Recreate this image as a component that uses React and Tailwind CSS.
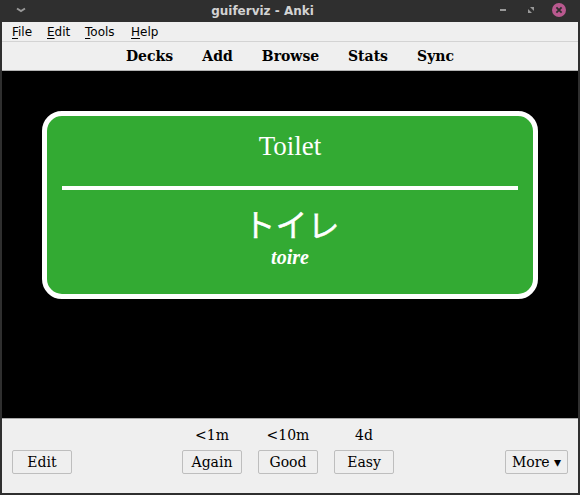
const menus = [
  ['File', 'w-[20px]'],
  ['Edit', 'w-[23px]'],
  ['Tools', 'w-[31px]'],
  ['Help', 'w-[27px]'],
];
const links = [
  ['Decks', 'w-[47px]'],
  ['Add', 'w-[31px]'],
  ['Browse', 'w-[57px]'],
  ['Stats', 'w-[40px]'],
  ['Sync', 'w-[37px]'],
];
const answers = [
  ['<1m', 'Again'],
  ['<10m', 'Good'],
  ['4d', 'Easy'],
];

function Button({ children, className = 'w-[60px]' }) {
  return (
    <button className={`flex h-6 items-center justify-center rounded-[2px] border border-[#bebebe] bg-[#efefef] text-[14px] leading-none whitespace-nowrap ${className}`}>
      {children}
    </button>
  );
}

function TitleBar() {
  return (
    <header className="relative flex h-[22px] items-center justify-between bg-[#2f2f2f] pr-[14px] pl-4">
      <svg width="10" height="20" viewBox="0 0 10 20" className="mb-[2px]" fill="none" stroke="#999" strokeWidth="2">
        <path d="M1 8.5 L5 11 L9 8.5" />
      </svg>
      <h1 className="absolute inset-x-0 top-0 pr-[55px] text-center font-['DejaVu_Sans',sans-serif] text-[12px] leading-[22px] font-bold text-[#d3d3d3]">guiferviz - Anki</h1>
      <svg width="68" height="20" viewBox="0 0 68 20" className="mb-[2px]">
        <rect x="2" y="9" width="6" height="2" fill="#999" />
        <path d="M32 7h4v4zM30 9v4h4z" fill="#999" />
        <circle cx="61" cy="10" r="7" fill="#b9598f" />
        <path d="M58.4 7.4l5.2 5.2M63.6 7.4l-5.2 5.2" stroke="#2f2f2f" strokeWidth="1.8" />
      </svg>
    </header>
  );
}

export default function App() {
  return (
    <div className="flex h-[495px] w-[580px] flex-col overflow-hidden bg-[#2f2f2f] font-['DejaVu_Serif',serif] text-black">
      <TitleBar />
      <div className="mx-[2px] mb-[2px] flex flex-1 flex-col bg-[#efefef]">
        <nav className="flex h-5 gap-[15px] border-b border-[#d3d3d3] pl-[10px] font-['DejaVu_Sans',sans-serif] text-[12px] leading-[20px]">
          {menus.map(([m, w]) => (
            <span key={m} className={w}>
              <span className="underline decoration-1 underline-offset-2">{m[0]}</span>
              {m.slice(1)}
            </span>
          ))}
        </nav>
        <nav className="flex h-[29px] justify-center gap-[29px] border-b border-[#b3b3b3] text-[14px] leading-7 font-bold">
          {links.map(([l, w]) => (
            <a key={l} className={`flex justify-center ${w}`}>{l}</a>
          ))}
        </nav>
        <main className="h-[347px] bg-black px-10 pt-10">
          <section className="flex h-[188px] flex-col rounded-[20px] border-[5px] border-white bg-[#33aa33] px-[15px] text-center font-['Liberation_Serif','Noto_Sans_CJK_JP',serif] text-white">
            <div className="h-[70px] pt-[15px] text-[27px] leading-[30px]">Toilet</div>
            <hr className="h-1 border-0 bg-white" />
            <div className="pt-3 pb-[2px] pl-[3px] font-['Noto_Sans_CJK_JP',sans-serif] text-[32px] leading-[42px] [-webkit-text-stroke:0.4px_white]">トイレ</div>
            <div className="text-[20px] leading-[22px] font-bold italic">toire</div>
          </section>
        </main>
        <footer className="flex flex-1 items-start border-t border-[#a9a9a9] px-[10px] text-[14px]">
          <div className="pt-[31px]"><Button>Edit</Button></div>
          <div className="ml-[110px] flex gap-4">
            {answers.map(([time, label]) => (
              <div key={label} className="flex flex-col pt-[6px]">
                <span className="h-[25px] text-center leading-5">{time}</span>
                <Button>{label}</Button>
              </div>
            ))}
          </div>
          <div className="ml-auto pt-[31px]"><Button className="w-[63px]">More ▾</Button></div>
        </footer>
      </div>
    </div>
  );
}
